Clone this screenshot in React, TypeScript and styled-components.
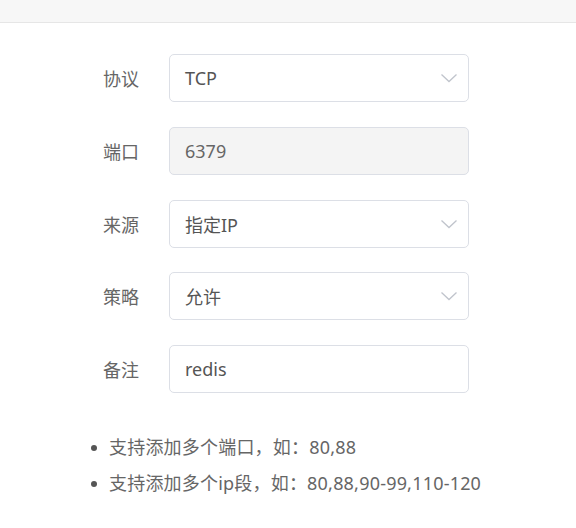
import React from "react";
import styled, { createGlobalStyle } from "styled-components";

const Global = createGlobalStyle`
  html, body { margin: 0; padding: 0; background: #fff; }
  body { font-family: "Noto Sans", "Noto Sans CJK SC", sans-serif; }
`;

const Page = styled.div`
  width: 576px;
  height: 528px;
  overflow: hidden;
  background: #fff;
`;

const Header = styled.div`
  height: 22px;
  background: #f7f7f7;
  border-bottom: 1px solid #e6e6e6;
  overflow: hidden;
  padding-left: 93px;
`;

const HeaderTitle = styled.div`
  font-size: 18px;
  line-height: 24px;
  margin-top: -21px;
  color: #333;
`;

const Form = styled.div`
  display: flex;
  flex-direction: column;
  gap: 24.75px;
  padding: 31px 0 0 103px;
`;

const Row = styled.div`
  display: flex;
  align-items: center;
`;

const Label = styled.div`
  width: 66px;
  font-size: 18px;
  color: #666;
`;

const Field = styled.div<{ $disabled?: boolean }>`
  box-sizing: border-box;
  width: 300px;
  height: 48px;
  border: 1px solid #dcdfe6;
  border-radius: 5px;
  background: ${(p) => (p.$disabled ? "#f4f4f4" : "#fff")};
  display: flex;
  align-items: center;
  justify-content: space-between;
  padding: 0 10px 0 15px;
  font-size: 18px;
  color: ${(p) => (p.$disabled ? "#666" : "#555")};
`;

const Chevron = styled.svg`
  width: 18px;
  height: 10px;
`;

const Tips = styled.ul`
  margin: 36px 0 0 0;
  padding: 0 0 0 109px;
  font-size: 18px;
  color: #666;
  line-height: 36px;
  letter-spacing: 0.2px;
  list-style: none;
`;

const Tip = styled.li`
  position: relative;
  &::before {
    content: "";
    position: absolute;
    left: -18px;
    top: 16px;
    width: 6px;
    height: 6px;
    border-radius: 50%;
    background: #555;
  }
`;

const Arrow = () => (
  <Chevron viewBox="0 0 18 10">
    <path d="M1.5 1.5 L9 8.5 L16.5 1.5" fill="none" stroke="#c0c4cc" strokeWidth="1.3" />
  </Chevron>
);

const rows: { label: string; value: string; select?: boolean; disabled?: boolean }[] = [
  { label: "协议", value: "TCP", select: true },
  { label: "端口", value: "6379", disabled: true },
  { label: "来源", value: "指定IP", select: true },
  { label: "策略", value: "允许", select: true },
  { label: "备注", value: "redis" },
];

export default function App() {
  return (
    <Page>
      <Global />
      <Header>
        <HeaderTitle>规</HeaderTitle>
      </Header>
      <Form>
        {rows.map((r) => (
          <Row key={r.label}>
            <Label>{r.label}</Label>
            <Field $disabled={r.disabled}>
              <span>{r.value}</span>
              {r.select && <Arrow />}
            </Field>
          </Row>
        ))}
      </Form>
      <Tips>
        <Tip>支持添加多个端口，如：80,88</Tip>
        <Tip>支持添加多个ip段，如：80,88,90-99,110-120</Tip>
      </Tips>
    </Page>
  );
}
